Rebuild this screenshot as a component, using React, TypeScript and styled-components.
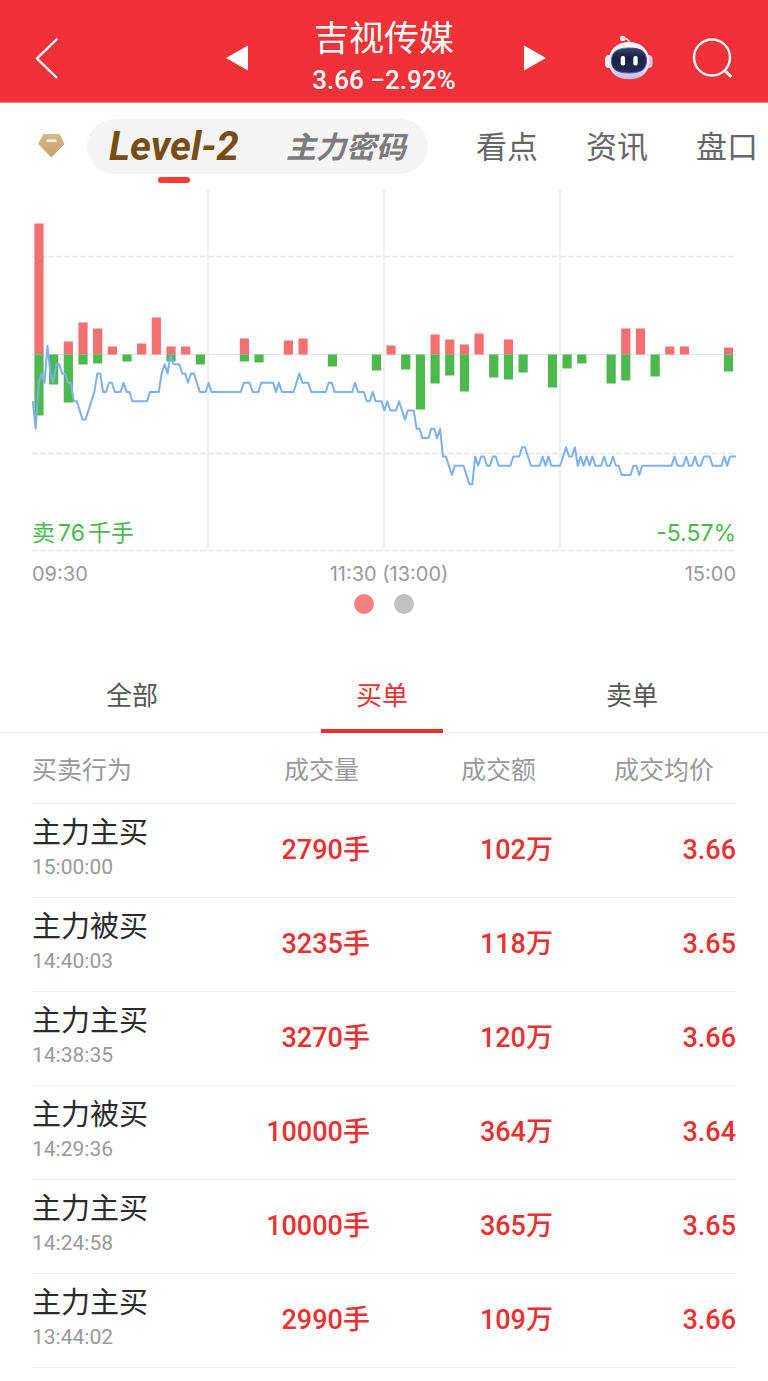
import React from 'react';
import styled, { createGlobalStyle } from 'styled-components';

const cjk = '"Noto Sans CJK SC", sans-serif';
const digits = `Roboto, ${cjk}`;

const GlobalStyle = createGlobalStyle`
  * { box-sizing: border-box; }
  body { margin: 0; background: #fff; color: #2b2b2b; font-family: ${cjk}; }
  button { border: 0; padding: 0; margin: 0; background: none; color: inherit; font: inherit; cursor: pointer; }
  a { color: inherit; text-decoration: none; }
  svg { display: block; }
`;

const Page = styled.div`
  min-height: 100vh;
  overflow-x: hidden;
  background: #fff;
`;

const Header = styled.header`
  display: grid;
  grid-template-columns: 1fr 324px 1fr;
  align-items: center;
  height: 103px;
  padding-top: 14px;
  background: #f03137;
  border-bottom: 1px solid #f58488;
  color: #fff;
`;

const BackButton = styled.button`
  justify-self: start;
  margin-left: 32px;
`;

const StockSwitch = styled.div`
  display: flex;
  align-items: center;
  justify-content: space-between;
`;

const StockTitle = styled.div`
  display: flex;
  flex-direction: column;
  align-items: center;
`;

const StockName = styled.h1`
  margin: 0;
  font-size: 35px;
  line-height: 44px;
  font-weight: 400;
`;

const StockQuote = styled.div`
  font-family: ${digits};
  font-size: 26px;
  line-height: 44px;
  font-weight: 500;
  white-space: nowrap;
`;

const HeaderActions = styled.div`
  display: flex;
  align-items: center;
  justify-content: flex-end;
  gap: 36px;
  padding-right: 32px;
`;

const SectionNav = styled.nav`
  display: flex;
  align-items: center;
  height: 86px;
  padding-left: 37px;
  overflow: hidden;
  white-space: nowrap;
`;

const Pill = styled.div`
  display: flex;
  flex: none;
  align-items: center;
  justify-content: space-between;
  width: 341px;
  height: 55px;
  margin-left: 21px;
  padding: 0 22px;
  border-radius: 28px;
  background: #f4f4f4;
`;

const PillLink = styled.a<{ $active?: boolean }>`
  position: relative;
  font-family: ${(p) => (p.$active ? digits : cjk)};
  font-size: ${(p) => (p.$active ? 40 : 30)}px;
  line-height: 55px;
  padding-bottom: ${(p) => (p.$active ? 0 : 2)}px;
  font-weight: 700;
  font-style: italic;
  color: ${(p) => (p.$active ? '#784d12' : '#7b7b7b')};

  &::after {
    content: '';
    display: ${(p) => (p.$active ? 'block' : 'none')};
    position: absolute;
    left: calc(50% - 16px);
    bottom: -9px;
    width: 32px;
    height: 6px;
    border-radius: 3px;
    background: #fb3a30;
  }
`;

const NavLink = styled.a`
  flex: none;
  margin-left: 48px;
  padding-bottom: 2px;
  font-size: 31px;
  line-height: 50px;
  color: #666;
`;

const ChartSection = styled.section`
  padding: 0 32px;
`;

const ChartArea = styled.div`
  position: relative;

  svg { width: 100%; height: 363px; }
`;

const ChartLabel = styled.span<{ $side: 'left' | 'right' }>`
  position: absolute;
  bottom: 4px;
  ${(p) => p.$side}: 0;
  font-family: Inter, ${cjk};
  font-size: 23px;
  line-height: 30px;
  color: #4cb84c;
`;

const LabelNumber = styled.span`
  margin: 0 3px;
`;

const TimeAxis = styled.div`
  display: grid;
  grid-template-columns: 1fr auto 1fr;
  padding-top: 8px;
  font-family: Inter, sans-serif;
  font-size: 20px;
  line-height: 28px;
  color: #999;
`;

const MiddleTime = styled.span`
  padding-left: 10px;
`;

const CloseTime = styled.span`
  text-align: right;
`;

const Dots = styled.div`
  display: flex;
  justify-content: center;
  gap: 20px;
  padding-top: 6px;
`;

const Dot = styled.button<{ $active?: boolean }>`
  width: 20px;
  height: 20px;
  border-radius: 50%;
  background: ${(p) => (p.$active ? '#f28080' : '#c1c1c1')};
`;

const OrderTabs = styled.div`
  display: flex;
  height: 119px;
  padding: 42px 11px 0 7px;
  border-bottom: 1px solid #eee;
`;

const OrderTab = styled.button<{ $active?: boolean }>`
  position: relative;
  flex: 1;
  font-size: 26px;
  line-height: 36px;
  color: ${(p) => (p.$active ? '#ee2f2f' : '#555')};

  &::after {
    content: '';
    display: ${(p) => (p.$active ? 'block' : 'none')};
    position: absolute;
    left: calc(50% - 61px);
    bottom: -1px;
    width: 122px;
    height: 4px;
    background: #ee2f2f;
  }
`;

const TableWrap = styled.section`
  padding: 0 32px;
`;

const Table = styled.table`
  width: 100%;
  table-layout: fixed;
  border-collapse: separate;
  border-spacing: 0;
`;

const HeadCell = styled.th<{ $inset?: number }>`
  height: 71px;
  padding: 0 ${(p) => p.$inset ?? 0}px 0 0;
  border-bottom: 1px solid #f3f3f3;
  font-size: 25px;
  font-weight: 400;
  line-height: 36px;
  text-align: ${(p) => (p.$inset ? 'right' : 'left')};
  color: #999;
  white-space: nowrap;
`;

const ActionCell = styled.td`
  height: 94px;
  padding: 0 0 8px;
  border-bottom: 1px solid #f3f3f3;
`;

const ActionName = styled.div`
  font-size: 29px;
  line-height: 40px;
  color: #2b2b2b;
`;

const ActionTime = styled.div`
  font-family: ${digits};
  font-size: 21px;
  line-height: 34px;
  color: #999;
`;

const ValueCell = styled.td`
  height: 94px;
  padding: 0 0 2px;
  border-bottom: 1px solid #f3f3f3;
  font-family: ${digits};
  font-size: 27px;
  font-weight: 500;
  line-height: 40px;
  text-align: right;
  color: #ee2f2f;
  white-space: nowrap;
`;

/* Net orders per five-minute slot: [slot, bought, sold] */
const volumes: [number, number, number][] = [
  [0, 131, 61], [1, 0, 30], [2, 13, 48], [3, 32, 10], [4, 26, 9], [5, 8, 0],
  [6, 0, 7], [7, 11, 0], [8, 37, 0], [9, 8, 7], [10, 8, 0], [11, 0, 10],
  [14, 16, 7], [15, 0, 8], [17, 14, 0], [18, 16, 0], [20, 0, 12], [23, 0, 16],
  [24, 9, 0], [25, 0, 15], [26, 0, 55], [27, 20, 29], [28, 15, 21], [29, 10, 37],
  [30, 21, 0], [31, 0, 23], [32, 15, 25], [33, 0, 18], [35, 0, 33], [36, 0, 14],
  [37, 0, 9], [39, 0, 29], [40, 26, 26], [41, 26, 0], [42, 0, 22], [43, 8, 0],
  [44, 8, 0], [47, 7, 17],
];

/* Price path: [minute, cents below the previous close] */
const prices: [number, number][] = [
  [0, 5], [1, 8], [2, 3], [3, 2], [4, 3], [5, -1], [6, 2], [7, 3], [8, 1], [9, 1],
  [10, 2], [11, 2], [12, 3], [13, 3], [14, 5], [15, 5], [16, 6], [17, 7], [18, 7],
  [19, 6], [20, 5], [21, 4], [22, 2], [23, 2], [24, 4], [25, 4], [26, 3], [27, 3],
  [28, 4], [30, 4], [31, 3], [32, 4], [33, 4], [34, 5], [39, 5], [40, 4], [43, 4],
  [44, 2], [45, 1], [46, 2], [47, 0], [48, 1], [50, 1], [51, 2], [52, 2], [53, 3],
  [54, 2], [55, 2], [56, 3], [57, 4], [59, 4], [60, 3], [61, 4], [71, 4], [72, 3],
  [74, 3], [75, 4], [77, 4], [78, 3], [82, 3], [83, 4], [84, 3], [85, 4], [89, 4],
  [91, 2], [92, 3], [94, 3], [95, 4], [100, 4], [101, 3], [102, 3], [103, 4],
  [109, 4], [110, 3], [111, 4], [113, 4], [114, 5], [115, 5], [116, 4], [117, 5],
  [119, 5], [120, 6], [121, 5], [122, 6], [124, 6], [125, 5], [127, 7], [128, 6],
  [130, 6], [131, 8], [132, 8], [133, 9], [135, 9], [136, 8], [137, 8], [138, 9],
  [139, 8], [140, 11], [141, 11], [143, 13], [144, 12], [147, 12], [149, 14],
  [150, 14], [151, 11], [152, 12], [153, 11], [154, 11], [155, 12], [156, 12],
  [157, 11], [158, 11], [159, 12], [163, 12], [164, 11], [166, 11], [167, 10],
  [168, 10], [170, 12], [173, 12], [174, 11], [175, 12], [176, 11], [177, 12],
  [180, 12], [182, 10], [183, 11], [184, 11], [185, 10], [186, 12], [187, 11],
  [188, 12], [189, 11], [190, 12], [191, 11], [192, 12], [194, 12], [195, 11],
  [196, 12], [197, 12], [198, 11], [199, 12], [200, 12], [201, 13], [204, 13],
  [205, 12], [206, 12], [207, 13], [208, 12], [218, 12], [219, 11], [220, 12],
  [222, 12], [223, 11], [224, 12], [225, 12], [226, 11], [227, 12], [228, 12],
  [229, 11], [231, 11], [232, 12], [235, 12], [236, 11], [237, 12], [238, 11],
  [240, 11],
];

const BASE = 165.5;
const pricePoints = prices
  .map(([m, c]) => `${(0.8 + m * 2.93).toFixed(1)},${(BASE + 0.5 + c * 9.23).toFixed(1)}`)
  .join(' ');

const orders = [
  ['主力主买', '15:00:00', '2790手', '102万', '3.66'],
  ['主力被买', '14:40:03', '3235手', '118万', '3.65'],
  ['主力主买', '14:38:35', '3270手', '120万', '3.66'],
  ['主力被买', '14:29:36', '10000手', '364万', '3.64'],
  ['主力主买', '14:24:58', '10000手', '365万', '3.65'],
  ['主力主买', '13:44:02', '2990手', '109万', '3.66'],
];

const BackIcon = () => (
  <svg width="28" height="44" viewBox="0 0 28 44" fill="none" stroke="#fff" strokeWidth="2.4">
    <path d="M24.5 3.5 5 22.5l19.5 19" strokeLinecap="round" />
  </svg>
);

const PrevIcon = () => (
  <svg width="28" height="26" viewBox="0 0 28 26" fill="#fff">
    <path d="M4 13 26 0.5v25z" />
  </svg>
);

const NextIcon = () => (
  <svg width="28" height="26" viewBox="0 0 28 26" fill="#fff">
    <path d="M28 13 6 0.5v25z" />
  </svg>
);

const RobotIcon = () => (
  <svg width="50" height="46" viewBox="0 0 50 46">
    <defs>
      <linearGradient id="shell" x1="0" y1="0" x2="0" y2="1">
        <stop offset="0" stopColor="#fbfaff" />
        <stop offset="0.7" stopColor="#e4e1f6" />
        <stop offset="1" stopColor="#bfbce0" />
      </linearGradient>
      <linearGradient id="rim" x1="0" y1="0" x2="1" y2="1">
        <stop offset="0" stopColor="#62c6de" />
        <stop offset="0.35" stopColor="#3d3a78" />
        <stop offset="0.7" stopColor="#6a3fd8" />
        <stop offset="1" stopColor="#4a5cf0" />
      </linearGradient>
      <linearGradient id="visor" x1="0" y1="0" x2="0" y2="1">
        <stop offset="0" stopColor="#3a4066" />
        <stop offset="0.4" stopColor="#1b2144" />
        <stop offset="1" stopColor="#222b52" />
      </linearGradient>
    </defs>
    <path d="M19 4.2c3-1 6 0 6.5 4" fill="none" stroke="#f3e9f5" strokeWidth="1.6" />
    <circle cx="18.7" cy="3.4" r="2.7" fill="#efe6f4" />
    <rect x="1" y="20" width="8" height="13" rx="4" fill="#ece9fa" />
    <rect x="40.5" y="20" width="8" height="13" rx="4" fill="#cdc9ec" />
    <path d="M25 7c12 0 20.5 8 20.5 19S38 44.3 25 44.3 4.5 37 4.5 26 13 7 25 7z" fill="url(#shell)" />
    <path d="M25 13c12 0 17.5 3.5 17.5 12.5S37 38 25 38 7.5 34.5 7.5 25.5 13 13 25 13z" fill="url(#visor)" stroke="url(#rim)" strokeWidth="1" />
    <rect x="16.7" y="21" width="4.4" height="9.5" rx="2" fill="#fff" />
    <rect x="29.3" y="21" width="4.4" height="9.5" rx="2" fill="#fff" />
  </svg>
);

const SearchIcon = () => (
  <svg width="46" height="46" viewBox="0 0 46 46" fill="none" stroke="#fff" strokeWidth="2.4">
    <circle cx="22" cy="22.5" r="18" />
    <path d="m34.500 35.500 7 6.300" strokeWidth="3" />
  </svg>
);

const GemIcon = () => (
  <svg width="29" height="28" viewBox="0 0 29 28">
    <defs>
      <linearGradient id="gem" x1="0" y1="0" x2="0" y2="1">
        <stop offset="0" stopColor="#d6b787" />
        <stop offset="1" stopColor="#c79f6b" />
      </linearGradient>
    </defs>
    <path
      d="M6.5 2.5h16l4.5 9.5L14.3 25 1.7 12z"
      fill="url(#gem)"
      stroke="url(#gem)"
      strokeWidth="1"
      strokeLinejoin="round"
    />
    <rect x="9.5" y="7.5" width="10" height="2.3" rx="0.5" fill="#fff" />
  </svg>
);

const FlowChart = () => (
  <svg viewBox="0 0 704 363" preserveAspectRatio="none" role="img" aria-label="主力买卖分时图">
    <g stroke="#e6e6e6" strokeWidth="1.5" strokeDasharray="6 2">
      {[176, 352, 528].map((x) => (
        <path key={x} d={`M${x} 1V362`} />
      ))}
      {[67.5, 264.5, 361.5].map((y) => (
        <path key={y} d={`M0 ${y}H704`} />
      ))}
    </g>
    <path d={`M0 ${BASE}H704`} stroke="#e2e2e2" strokeWidth="1.2" />
    {volumes.map(([slot, up, down]) => (
      <g key={slot}>
        <rect x={2.4 + slot * 14.67} y={BASE - up} width="9.2" height={up} fill="#f27070" />
        <rect x={2.4 + slot * 14.67} y={BASE} width="9.2" height={down} fill="#4db84d" />
      </g>
    ))}
    <polyline points={pricePoints} fill="none" stroke="#7cb0f2" strokeWidth="2" strokeLinejoin="round" />
  </svg>
);

export default function App() {
  return (
    <Page>
      <GlobalStyle />
      <Header>
        <BackButton aria-label="返回"><BackIcon /></BackButton>
        <StockSwitch>
          <button aria-label="上一只"><PrevIcon /></button>
          <StockTitle>
            <StockName>吉视传媒</StockName>
            <StockQuote>3.66 −2.92%</StockQuote>
          </StockTitle>
          <button aria-label="下一只"><NextIcon /></button>
        </StockSwitch>
        <HeaderActions>
          <button aria-label="智能助手"><RobotIcon /></button>
          <button aria-label="搜索"><SearchIcon /></button>
        </HeaderActions>
      </Header>

      <SectionNav>
        <GemIcon />
        <Pill>
          <PillLink href="#level2" $active>Level-2</PillLink>
          <PillLink href="#main">主力密码</PillLink>
        </Pill>
        <NavLink href="#views">看点</NavLink>
        <NavLink href="#news">资讯</NavLink>
        <NavLink href="#quotes">盘口</NavLink>
      </SectionNav>

      <ChartSection>
        <ChartArea>
          <FlowChart />
          <ChartLabel $side="left">卖<LabelNumber>76</LabelNumber>千手</ChartLabel>
          <ChartLabel $side="right">-5.57%</ChartLabel>
        </ChartArea>
        <TimeAxis>
          <span>09:30</span>
          <MiddleTime>11:30 (13:00)</MiddleTime>
          <CloseTime>15:00</CloseTime>
        </TimeAxis>
        <Dots>
          <Dot $active aria-label="第一页" />
          <Dot aria-label="第二页" />
        </Dots>
      </ChartSection>

      <OrderTabs role="tablist">
        <OrderTab role="tab" aria-selected={false}>全部</OrderTab>
        <OrderTab role="tab" aria-selected $active>买单</OrderTab>
        <OrderTab role="tab" aria-selected={false}>卖单</OrderTab>
      </OrderTabs>

      <TableWrap>
        <Table>
          <colgroup>
            <col style={{ width: '22%' }} />
            <col style={{ width: '26%' }} />
            <col style={{ width: '26%' }} />
            <col style={{ width: '26%' }} />
          </colgroup>
          <thead>
            <tr>
              <HeadCell scope="col">买卖行为</HeadCell>
              <HeadCell scope="col" $inset={11}>成交量</HeadCell>
              <HeadCell scope="col" $inset={17}>成交额</HeadCell>
              <HeadCell scope="col" $inset={22}>成交均价</HeadCell>
            </tr>
          </thead>
          <tbody>
            {orders.map(([name, time, volume, amount, price]) => (
              <tr key={time}>
                <ActionCell>
                  <ActionName>{name}</ActionName>
                  <ActionTime>{time}</ActionTime>
                </ActionCell>
                <ValueCell>{volume}</ValueCell>
                <ValueCell>{amount}</ValueCell>
                <ValueCell>{price}</ValueCell>
              </tr>
            ))}
          </tbody>
        </Table>
      </TableWrap>
    </Page>
  );
}
